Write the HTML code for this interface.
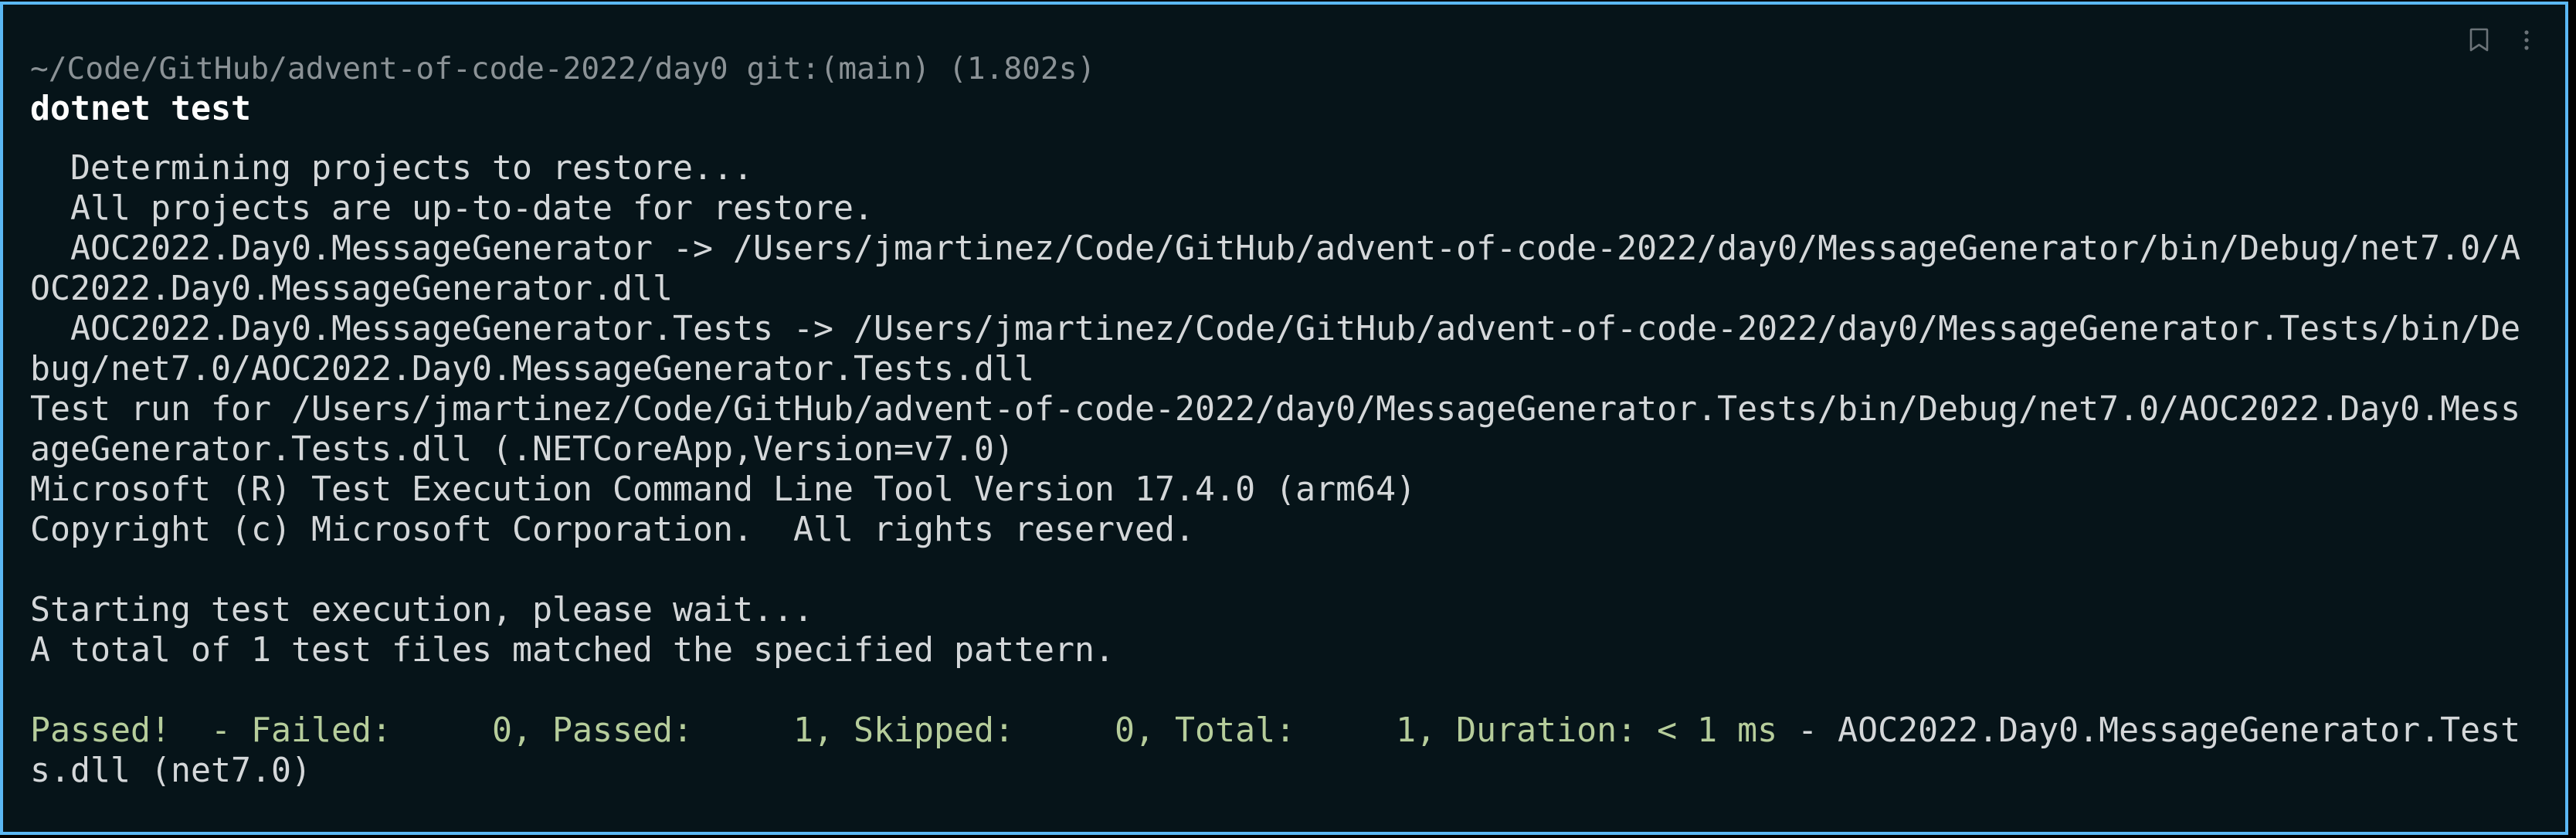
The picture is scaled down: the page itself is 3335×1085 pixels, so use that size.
<!DOCTYPE html>
<html><head><meta charset="utf-8"><style>
html,body{margin:0;padding:0;background:#000;width:3335px;height:1085px;overflow:hidden}
.box{position:absolute;left:0;top:2px;width:3317px;height:1071px;border:4px solid #5bb8f4;background:#061419}
.t{position:absolute;left:39px;margin:0;font-family:"DejaVu Sans Mono","Liberation Mono",monospace;white-space:pre;color:#d4d7d9}
.hdr{top:63px;font-size:39.5px;line-height:52px;color:#8b9296}
.cmd{top:115px;font-size:43.2px;line-height:52px;color:#fff;font-weight:bold}
.out{top:192px;font-size:43.2px;line-height:52px}
.g{color:#b6cd9b}
</style></head><body>
<div class="box"></div>
<div class="t hdr">~/Code/GitHub/advent-of-code-2022/day0 git:(main) (1.802s)</div>
<div class="t cmd">dotnet test</div>
<pre class="t out">  Determining projects to restore...
  All projects are up-to-date for restore.
  AOC2022.Day0.MessageGenerator -&gt; /Users/jmartinez/Code/GitHub/advent-of-code-2022/day0/MessageGenerator/bin/Debug/net7.0/A
OC2022.Day0.MessageGenerator.dll
  AOC2022.Day0.MessageGenerator.Tests -&gt; /Users/jmartinez/Code/GitHub/advent-of-code-2022/day0/MessageGenerator.Tests/bin/De
bug/net7.0/AOC2022.Day0.MessageGenerator.Tests.dll
Test run for /Users/jmartinez/Code/GitHub/advent-of-code-2022/day0/MessageGenerator.Tests/bin/Debug/net7.0/AOC2022.Day0.Mess
ageGenerator.Tests.dll (.NETCoreApp,Version=v7.0)
Microsoft (R) Test Execution Command Line Tool Version 17.4.0 (arm64)
Copyright (c) Microsoft Corporation.  All rights reserved.

Starting test execution, please wait...
A total of 1 test files matched the specified pattern.

<span class="g">Passed!  - Failed:     0, Passed:     1, Skipped:     0, Total:     1, Duration: &lt; 1 ms</span> - AOC2022.Day0.MessageGenerator.Test
s.dll (net7.0)</pre>
<svg style="position:absolute;left:3190px;top:32px" width="100" height="40" viewBox="0 0 100 40">
<path d="M9 7 Q9 6 10 6 H29 Q30 6 30 7 V33 L19.5 26 L9 33 Z" fill="none" stroke="#6b7378" stroke-width="2.6" stroke-linejoin="round"/>
<circle cx="81" cy="10" r="2.6" fill="#6b7378"/>
<circle cx="81" cy="20" r="2.6" fill="#6b7378"/>
<circle cx="81" cy="30" r="2.6" fill="#6b7378"/>
</svg>
</body></html>
